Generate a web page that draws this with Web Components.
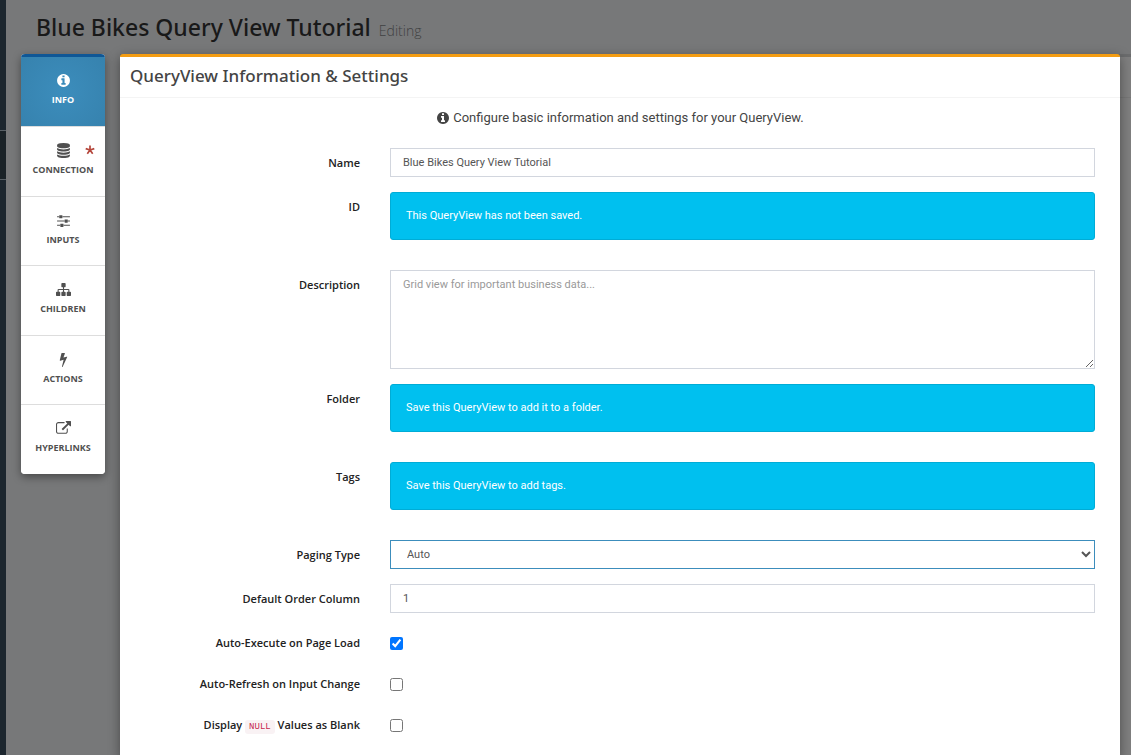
<!DOCTYPE html>
<html lang="en">
<head>
<meta charset="utf-8">
<title>Blue Bikes Query View Tutorial</title>
<style>
html, body { margin: 0; min-height: 100%; background: #777879; }
body { font-family: "Open Sans", "Noto Sans", sans-serif; font-size: 11px; color: #333; }
</style>
</head>
<body>
<app-shell>
  <page-header slot="header" heading="Blue Bikes Query View Tutorial" note="Editing"></page-header>
  <step-nav slot="nav">
    <step-item icon="info" label="INFO" active></step-item>
    <step-item icon="database" label="CONNECTION" required></step-item>
    <step-item icon="sliders" label="INPUTS"></step-item>
    <step-item icon="sitemap" label="CHILDREN"></step-item>
    <step-item icon="bolt" label="ACTIONS"></step-item>
    <step-item icon="link" label="HYPERLINKS"></step-item>
  </step-nav>
  <settings-panel heading="QueryView Information &amp; Settings">
    <query-form></query-form>
  </settings-panel>
</app-shell>

<script>
const ICONS = {
  info: 'M1152 1376v-160q0-14-9-23t-23-9h-96v-512q0-14-9-23t-23-9h-320q-14 0-23 9t-9 23v160q0 14 9 23t23 9h96v320h-96q-14 0-23 9t-9 23v160q0 14 9 23t23 9h448q14 0 23-9t9-23zm-128-896v-160q0-14-9-23t-23-9h-192q-14 0-23 9t-9 23v160q0 14 9 23t23 9h192q14 0 23-9t9-23zm640 416q0 209-103 385.5t-279.5 279.5-385.5 103-385.5-103-279.5-279.5-103-385.5 103-385.5 279.5-279.5 385.5-103 385.5 103 279.5 279.5 103 385.5z',
  database: 'M896 768q237 0 443-43t325-127v170q0 69-103 128t-280 93.5-385 34.5-385-34.5-280-93.5-103-128v-170q119 84 325 127t443 43zm0 768q237 0 443-43t325-127v170q0 69-103 128t-280 93.5-385 34.5-385-34.5-280-93.5-103-128v-170q119 84 325 127t443 43zm0-384q237 0 443-43t325-127v170q0 69-103 128t-280 93.5-385 34.5-385-34.5-280-93.5-103-128v-170q119 84 325 127t443 43zm0-1152q208 0 385 34.5t280 93.5 103 128v128q0 69-103 128t-280 93.5-385 34.5-385-34.5-280-93.5-103-128v-128q0-69 103-128t280-93.5 385-34.5z',
  sliders: 'M480 1408v128h-352v-128h352zm352-128q26 0 45 19t19 45v256q0 26-19 45t-45 19h-256q-26 0-45-19t-19-45v-256q0-26 19-45t45-19h256zm160-384v128h-864v-128h864zm-640-512v128h-224v-128h224zm1312 1024v128h-736v-128h736zm-960-1152q26 0 45 19t19 45v256q0 26-19 45t-45 19h-256q-26 0-45-19t-19-45v-256q0-26 19-45t45-19h256zm640 512q26 0 45 19t19 45v256q0 26-19 45t-45 19h-256q-26 0-45-19t-19-45v-256q0-26 19-45t45-19h256zm320 128v128h-224v-128h224zm0-512v128h-864v-128h864z',
  sitemap: 'M1792 1248v320q0 40-28 68t-68 28h-320q-40 0-68-28t-28-68v-320q0-40 28-68t68-28h96v-192h-512v192h96q40 0 68 28t28 68v320q0 40-28 68t-68 28h-320q-40 0-68-28t-28-68v-320q0-40 28-68t68-28h96v-192h-512v192h96q40 0 68 28t28 68v320q0 40-28 68t-68 28h-320q-40 0-68-28t-28-68v-320q0-40 28-68t68-28h96v-192q0-52 38-90t90-38h512v-192h-96q-40 0-68-28t-28-68v-320q0-40 28-68t68-28h320q40 0 68 28t28 68v320q0 40-28 68t-68 28h-96v192h512q52 0 90 38t38 90v192h96q40 0 68 28t28 68z',
  bolt: 'M1333 566q18 20 7 44l-540 1157q-13 25-42 25-4 0-14-2-17-5-25.5-19t-4.5-30l197-808-406 101q-4 1-12 1-18 0-31-11-18-15-13-39l201-825q4-14 16-23t28-9h328q19 0 32 12.5t13 29.5q0 8-5 18l-171 463 396-98q8-2 12-2 19 0 34 15z',
  link: 'M1408 928v320q0 119-84.5 203.5t-203.5 84.5h-832q-119 0-203.5-84.5t-84.5-203.5v-832q0-119 84.5-203.5t203.5-84.5h704q14 0 23 9t9 23v64q0 14-9 23t-23 9h-704q-66 0-113 47t-47 113v832q0 66 47 113t113 47h832q66 0 113-47t47-113v-320q0-14 9-23t23-9h64q14 0 23 9t9 23zm384-864v512q0 26-19 45t-45 19-45-19l-176-176-652 652q-10 10-23 10t-23-10l-114-114q-10-10-10-23t10-23l652-652-176-176q-19-19-19-45t19-45 45-19h512q26 0 45 19t19 45z'
};
const icon = (name, size) =>
  `<svg width="${size}" height="${size}" viewBox="0 0 1792 1792" fill="currentColor" aria-hidden="true"><path d="${ICONS[name]}"/></svg>`;

class Base extends HTMLElement {
  connectedCallback() {
    if (this.shadowRoot) return;
    this.attachShadow({ mode: 'open' }).innerHTML = this.render();
  }
}

customElements.define('app-shell', class extends Base {
  render() {
    return `<style>
      :host { display: grid; grid-template-columns: 6px minmax(0, 1fr); min-height: 100vh; background: #777879; }
      .rail { background: #1c262e; display: flex; flex-direction: column; }
      .rail i { height: 48px; margin-top: 130px; background: #1a2227; border: solid #596066; border-width: 1px 0; }
      .body { display: grid; grid-template-columns: 84px minmax(0, 1fr); column-gap: 15px; padding-left: 15px; align-items: start; }
      .backdrop { background: linear-gradient(#777, #777) 0 40px / 100% 1px no-repeat #7f7f7f; border-top: 3px solid #6b6c6d; }
    </style>
    <div class="rail"><i></i></div>
    <main><slot name="header"></slot>
      <div class="body"><slot name="nav"></slot><div class="backdrop"><slot></slot></div></div>
    </main>`;
  }
});

customElements.define('page-header', class extends Base {
  render() {
    return `<style>
      :host { display: block; height: 54px; padding-left: 30px; box-sizing: border-box; }
      h1 { margin: 0; padding-top: 11px; font-family: "Noto Sans", sans-serif; font-size: 23px; line-height: 32px; font-weight: 500; color: #191919; }
      small { font-family: "Open Sans", sans-serif; font-size: 14px; font-weight: 300; color: #404142; margin-left: 2px; }
    </style><h1>${this.getAttribute('heading')} <small>${this.getAttribute('note')}</small></h1>`;
  }
});

customElements.define('step-nav', class extends Base {
  render() {
    return `<style>
      :host { display: block; }
      nav { display: grid; grid-template-rows: 72px; grid-auto-rows: 1fr; height: 420px; background: #fff; border-radius: 4px; overflow: hidden; box-shadow: 0 3px 8px rgba(0,0,0,.4); }
    </style><nav><slot></slot></nav>`;
  }
});

customElements.define('step-item', class extends Base {
  render() {
    const star = this.hasAttribute('required')
      ? '<svg class="star" width="10" height="10" viewBox="0 0 10 10" aria-hidden="true"><path d="M5 5V.5M5 5l4.3-1.4M5 5l2.7 3.7M5 5L2.3 8.7M5 5L.7 3.6" stroke="#b5473c" stroke-width="1.7" fill="none"/></svg>' : '';
    return `<style>
      :host { display: block; }
      button { position: relative; display: flex; flex-direction: column; align-items: center; gap: 5px; width: 100%; height: 100%;
        margin: 0; padding: 16px 0 0; box-sizing: border-box; border: 0; border-top: 1px solid #ddd; background: #fff; color: #505050;
        font-family: inherit; font-size: 9px; line-height: 14px; font-weight: 700; }
      :host([active]) button { border-top: 3px solid #0f5796; color: #fff; background: radial-gradient(circle, #3c8dbc, #3682ae); }
      svg { display: block; }
      .star { position: absolute; top: 18px; right: 10px; }
    </style><button type="button">${icon(this.getAttribute('icon'), 15)}<span>${this.getAttribute('label')}</span>${star}</button>`;
  }
});

customElements.define('settings-panel', class extends Base {
  render() {
    return `<style>
      :host { display: block; margin: -3px 11px 0 0; background: #fff; border-top: 3px solid #f39c12; border-radius: 3px 3px 0 0; box-shadow: 0 3px 12px rgba(0,0,0,.4); }
      h2 { margin: 0; padding: 6px 10px 8px; font-family: "Noto Sans", sans-serif; font-size: 17px; line-height: 26px; font-weight: 500; color: #444; border-bottom: 1px solid #f4f4f4; }
    </style><section><h2>${this.getAttribute('heading').replace('&', '&amp;')}</h2><slot></slot></section>`;
  }
});

customElements.define('query-form', class extends Base {
  render() {
    return `<style>
      :host { display: block; font-family: Roboto, "Open Sans", sans-serif; }
      .intro { display: flex; justify-content: center; align-items: center; gap: 3px; margin: 0; padding: 9px 0 20px; font-size: 13px; line-height: 21px; color: #444; }
      form { display: flex; flex-direction: column; gap: 15px; padding: 0 25px 21px 0; }
      .row { display: grid; grid-template-columns: 240px minmax(0, 1fr); column-gap: 30px; align-items: start; }
      .name { padding-top: 7px; text-align: right; font-family: "Open Sans", sans-serif; line-height: 16px; font-weight: 600; color: #222; white-space: nowrap; }
      input[type=text], textarea, select { display: block; width: 100%; height: 29px; margin: 0; padding: 0 12px; box-sizing: border-box;
        border: 1px solid #d2d6de; border-radius: 0; background: #fff; color: #555; font: inherit; line-height: 16px; outline: 0; }
      textarea { height: 99px; padding-top: 6px; resize: vertical; }
      textarea::placeholder { color: #999; }
      select { border-color: #3c8dbc; }
      .alert { height: 48px; padding: 15px; margin-bottom: 15px; box-sizing: border-box; border: 1px solid #00acd6; border-radius: 3px; background: #00c0ef; color: #fff; line-height: 16px; }
      .check { height: 26px; }
      input[type=checkbox] { display: block; width: 13px; height: 13px; margin: 9px 0 0; }
      code { font-family: "Liberation Mono", monospace; font-size: 9px; font-weight: 400; color: #c7254e; background: #f9f2f4; border-radius: 3px; padding: 2px 4px; }
    </style>
    <p class="intro">${icon('info', 14)}<span>Configure basic information and settings for your QueryView.</span></p>
    <form>
      <div class="row"><label class="name" for="name">Name</label><input type="text" id="name" value="Blue Bikes Query View Tutorial"></div>
      <div class="row"><span class="name">ID</span><div class="alert">This QueryView has not been saved.</div></div>
      <div class="row"><label class="name" for="desc">Description</label><textarea id="desc" placeholder="Grid view for important business data..."></textarea></div>
      <div class="row"><span class="name">Folder</span><div class="alert">Save this QueryView to add it to a folder.</div></div>
      <div class="row"><span class="name">Tags</span><div class="alert">Save this QueryView to add tags.</div></div>
      <div class="row"><label class="name" for="paging">Paging Type</label><select id="paging"><option>Auto</option></select></div>
      <div class="row"><label class="name" for="order">Default Order Column</label><input type="text" id="order" value="1"></div>
      <div class="row check"><label class="name" for="exec">Auto-Execute on Page Load</label><input type="checkbox" id="exec" checked></div>
      <div class="row check"><label class="name" for="refresh">Auto-Refresh on Input Change</label><input type="checkbox" id="refresh"></div>
      <div class="row check"><label class="name" for="blank">Display <code>NULL</code> Values as Blank</label><input type="checkbox" id="blank"></div>
    </form>`;
  }
});
</script>
</body>
</html>
